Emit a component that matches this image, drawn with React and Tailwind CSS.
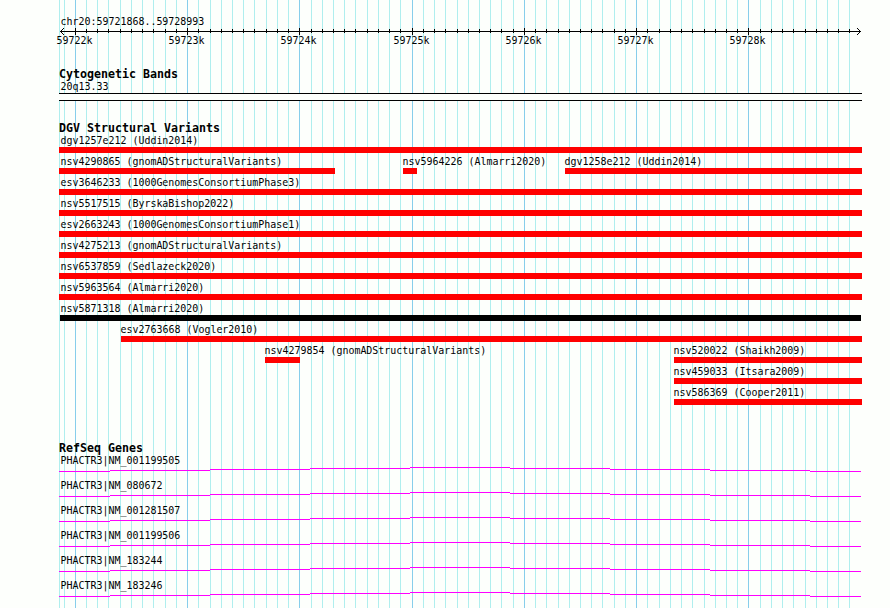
const MAJOR = [75, 187, 299, 412, 524, 636, 748];

const GRID = [
  64, 75, 86, 97, 108, 120, 131, 142, 153, 165, 176, 187, 198, 210, 221, 232,
  243, 254, 266, 277, 288, 299, 311, 322, 333, 344, 355, 367, 378, 389, 400,
  412, 423, 434, 445, 457, 468, 479, 490, 501, 513, 524, 535, 546, 558, 569,
  580, 591, 602, 614, 625, 636, 647, 659, 670, 681, 692, 704, 715, 726, 737,
  748, 760, 771, 782, 793, 805, 816, 827, 838, 849,
];

const SCALE = [
  ['59722k', 112],
  ['59723k', 112],
  ['59724k', 113],
  ['59725k', 112],
  ['59726k', 112],
  ['59727k', 112],
  ['59728k', 112],
];

// Each row is a list of features: name, bar start, bar end, label start.
const VARIANTS = [
  [['dgv1257e212 (Uddin2014)', 59, 862, 60.5]],
  [
    ['nsv4290865 (gnomADStructuralVariants)', 59, 335, 60.5],
    ['nsv5964226 (Almarri2020)', 403, 417, 402.5],
    ['dgv1258e212 (Uddin2014)', 565, 862, 564.5],
  ],
  [['esv3646233 (1000GenomesConsortiumPhase3)', 59, 862, 60.5]],
  [['nsv5517515 (ByrskaBishop2022)', 59, 862, 60.5]],
  [['esv2663243 (1000GenomesConsortiumPhase1)', 59, 862, 60.5]],
  [['nsv4275213 (gnomADStructuralVariants)', 59, 862, 60.5]],
  [['nsv6537859 (Sedlazeck2020)', 59, 862, 60.5]],
  [['nsv5963564 (Almarri2020)', 59, 862, 60.5]],
  [['nsv5871318 (Almarri2020)', 60, 861, 60.5, true]],
  [['esv2763668 (Vogler2010)', 121, 862, 120.5]],
  [
    ['nsv4279854 (gnomADStructuralVariants)', 265, 300, 264.5],
    ['nsv520022 (Shaikh2009)', 674, 862, 673.5],
  ],
  [['nsv459033 (Itsara2009)', 674, 862, 673.5]],
  [['nsv586369 (Cooper2011)', 674, 862, 673.5]],
];

const GENES = [
  'PHACTR3|NM_001199505',
  'PHACTR3|NM_080672',
  'PHACTR3|NM_001281507',
  'PHACTR3|NM_001199506',
  'PHACTR3|NM_183244',
  'PHACTR3|NM_183246',
];

const INTRON = [
  [59, 110, 4], [110, 210, 3], [210, 310, 2], [310, 410, 1], [410, 510, 0],
  [510, 610, 1], [610, 710, 2], [710, 810, 3], [810, 861, 4],
];

function GridLines() {
  return (
    <svg className="absolute inset-0" width="890" height="608" shapeRendering="crispEdges">
      <rect x="59" y="0" width="1" height="608" fill="#afeeee" />
      {GRID.map((x) => (
        <rect key={x} x={x} y="0" width="1" height="608" fill={MAJOR.includes(x) ? '#87ceeb' : '#afeeee'} />
      ))}
    </svg>
  );
}

function Axis() {
  return (
    <svg className="block" width="890" height="7" shapeRendering="crispEdges">
      <rect x="60" y="3" width="801" height="1" />
      {GRID.slice(1).map((x) =>
        MAJOR.includes(x) ? (
          <rect key={x} x={x} y="0" width="1" height="7" />
        ) : (
          <rect key={x} x={x} y="1" width="1" height="4" />
        ),
      )}
      {[1, 2, 3].map((d) => (
        <g key={d}>
          <rect x={60 + d} y={3 - d} width="1" height="1" />
          <rect x={60 + d} y={3 + d} width="1" height="1" />
          <rect x={860 - d} y={3 - d} width="1" height="1" />
          <rect x={860 - d} y={3 + d} width="1" height="1" />
        </g>
      ))}
    </svg>
  );
}

function Heading({ children }) {
  return <h2 className="pl-[59px] h-3.5 text-[11.63px] leading-[14px] font-bold">{children}</h2>;
}

function VariantRow({ features }) {
  return (
    <div className="grid h-[21px] grid-cols-[890px]">
      {features.map(([name, start, end, label, dark]) => (
        <div key={name} className="col-start-1 row-start-1">
          <div className="h-3" style={{ paddingLeft: label }}>{name}</div>
          <div
            className={dark ? 'h-1.5 bg-black' : 'h-1.5 bg-[#ff0000]'}
            style={{ marginLeft: start, width: end - start }}
          />
        </div>
      ))}
    </div>
  );
}

export default function App() {
  return (
    <div className="relative h-[608px] w-[890px] overflow-hidden bg-[#fdfffc] font-['DejaVu_Sans_Mono',monospace] text-[9.967px] leading-[12px] whitespace-pre text-black">
      <GridLines />
      <main className="relative pt-4">
        <section className="h-[51px]">
          <div className="h-3 pl-[60.5px]">chr20:59721868..59728993</div>
          <Axis />
          <div className="flex pl-[56.5px]">
            {SCALE.map(([text, width]) => (
              <span key={text} className="shrink-0" style={{ width }}>{text}</span>
            ))}
          </div>
        </section>

        <section className="h-[54px]">
          <Heading>Cytogenetic Bands</Heading>
          <div className="h-3 pl-[60.5px]">20q13.33</div>
          <div className="ml-[59px] h-2 w-[803px] border-y border-black bg-[#fdfffc]" />
        </section>

        <section className="h-[320px]">
          <Heading>DGV Structural Variants</Heading>
          {VARIANTS.map((features) => (
            <VariantRow key={features[0][0]} features={features} />
          ))}
        </section>

        <section>
          <Heading>RefSeq Genes</Heading>
          {GENES.map((name) => (
            <div key={name} className="h-[25px]">
              <div className="h-3 pl-[60.5px]">{name}</div>
              <svg className="block" width="890" height="5" shapeRendering="crispEdges">
                {INTRON.map(([a, b, y]) => (
                  <rect key={a} x={a} y={y} width={b - a} height="1" fill="#ff00ff" />
                ))}
              </svg>
            </div>
          ))}
        </section>
      </main>
    </div>
  );
}
